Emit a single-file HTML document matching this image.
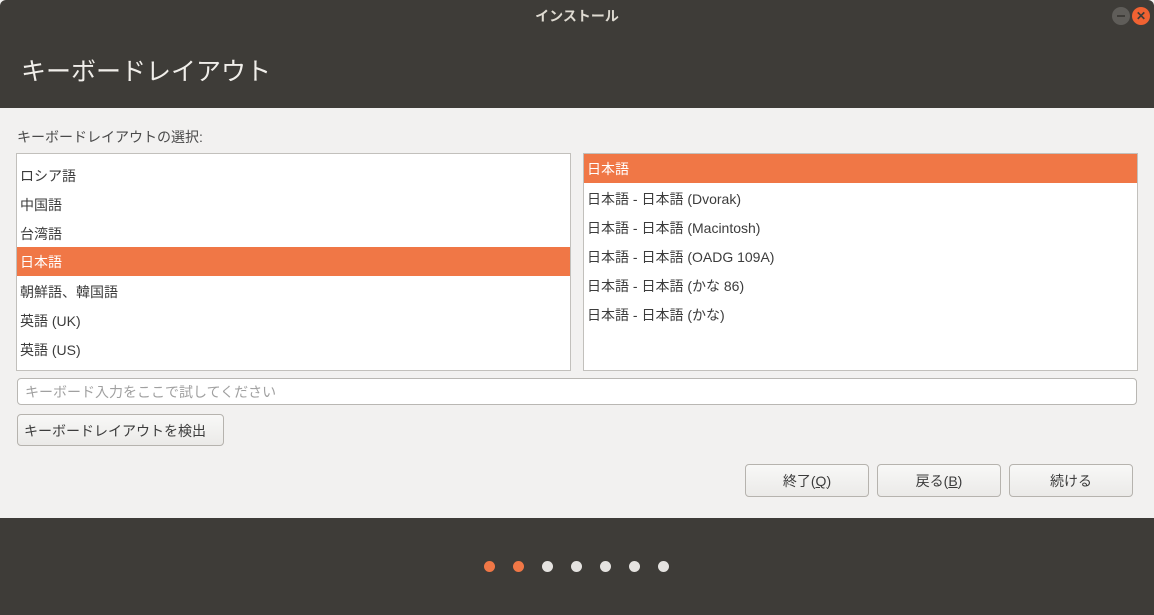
<!DOCTYPE html>
<html><head><meta charset="utf-8"><style>
*{box-sizing:border-box;margin:0;padding:0}
body{width:1154px;height:615px;overflow:hidden;font-family:"Liberation Sans","Noto Sans CJK JP",sans-serif;background:#f2f1f0;position:relative;color:#3c3c3c}
.tb{position:absolute;left:0;top:0;width:1154px;height:108px;background:#3e3c38;border-radius:6px 6px 0 0}
.tt{position:absolute;top:6px;width:100%;text-align:center;color:#dfdbd2;font-size:14px;font-weight:bold}
.h1{position:absolute;left:21px;top:52px;color:#f0eeea;font-size:25px}
.c{position:absolute;border-radius:50%;width:18px;height:18px;top:7px}
.lbl{position:absolute;left:17px;top:127px;font-size:14px;color:#4a4a4a}
.list{position:absolute;background:#fff;border:1px solid #c2c0bc;font-size:14px}
.row{position:absolute;left:0;right:0;height:29px;line-height:31px;padding-left:3px;color:#3c3c3c}
.sel{background:#f07746;color:#fff}
.inp{position:absolute;left:17px;top:378px;width:1120px;height:27px;border:1px solid #b9b7b3;border-radius:4px;background:#fff;font-size:14px;color:#a0a0a0;line-height:27px;padding-left:7px}
.btn{position:absolute;border:1px solid #b6b3ae;border-radius:4px;background:linear-gradient(#f8f8f7,#ebeae8);font-size:14px;text-align:center;color:#3c3c3c}
.bot{position:absolute;left:0;top:518px;width:1154px;height:97px;background:#3e3c38}
.d{position:absolute;top:561px;width:11px;height:11px;border-radius:50%;background:#e5e3e0}
</style></head><body>
<div class="tb"><div class="tt">インストール</div><div class="h1">キーボードレイアウト</div>
<div class="c" style="left:1112px;background:#5f5d59"><div style="position:absolute;left:5px;top:8px;width:8px;height:2px;background:#3e3c38"></div></div>
<div class="c" style="left:1132px;background:#f06232;color:#3e3c38;font-size:12px;text-align:center;line-height:18px;font-weight:bold">✕</div></div>
<div class="lbl">キーボードレイアウトの選択:</div>
<div class="list" style="left:16px;top:153px;width:555px;height:218px">
<div class="row" style="top:7px">ロシア語</div>
<div class="row" style="top:36px">中国語</div>
<div class="row" style="top:65px">台湾語</div>
<div class="row sel" style="top:93px">日本語</div>
<div class="row" style="top:123px">朝鮮語、韓国語</div>
<div class="row" style="top:152px">英語 (UK)</div>
<div class="row" style="top:181px">英語 (US)</div>
</div>
<div class="list" style="left:583px;top:153px;width:555px;height:218px">
<div class="row sel" style="top:0">日本語</div>
<div class="row" style="top:30px">日本語 - 日本語 (Dvorak)</div>
<div class="row" style="top:59px">日本語 - 日本語 (Macintosh)</div>
<div class="row" style="top:88px">日本語 - 日本語 (OADG 109A)</div>
<div class="row" style="top:117px">日本語 - 日本語 (かな 86)</div>
<div class="row" style="top:146px">日本語 - 日本語 (かな)</div>
</div>
<div class="inp">キーボード入力をここで試してください</div>
<div class="btn" style="left:17px;top:414px;width:207px;height:32px;line-height:32px;text-align:left;padding-left:6px">キーボードレイアウトを検出</div>
<div class="btn" style="left:745px;top:464px;width:124px;height:33px;line-height:33px">終了(<u>Q</u>)</div>
<div class="btn" style="left:877px;top:464px;width:124px;height:33px;line-height:33px">戻る(<u>B</u>)</div>
<div class="btn" style="left:1009px;top:464px;width:124px;height:33px;line-height:33px">続ける</div>
<div class="bot"></div>
<div class="d" style="left:484px;background:#f07746"></div>
<div class="d" style="left:513px;background:#f07746"></div>
<div class="d" style="left:542px"></div>
<div class="d" style="left:571px"></div>
<div class="d" style="left:600px"></div>
<div class="d" style="left:629px"></div>
<div class="d" style="left:658px"></div>
</body></html>
